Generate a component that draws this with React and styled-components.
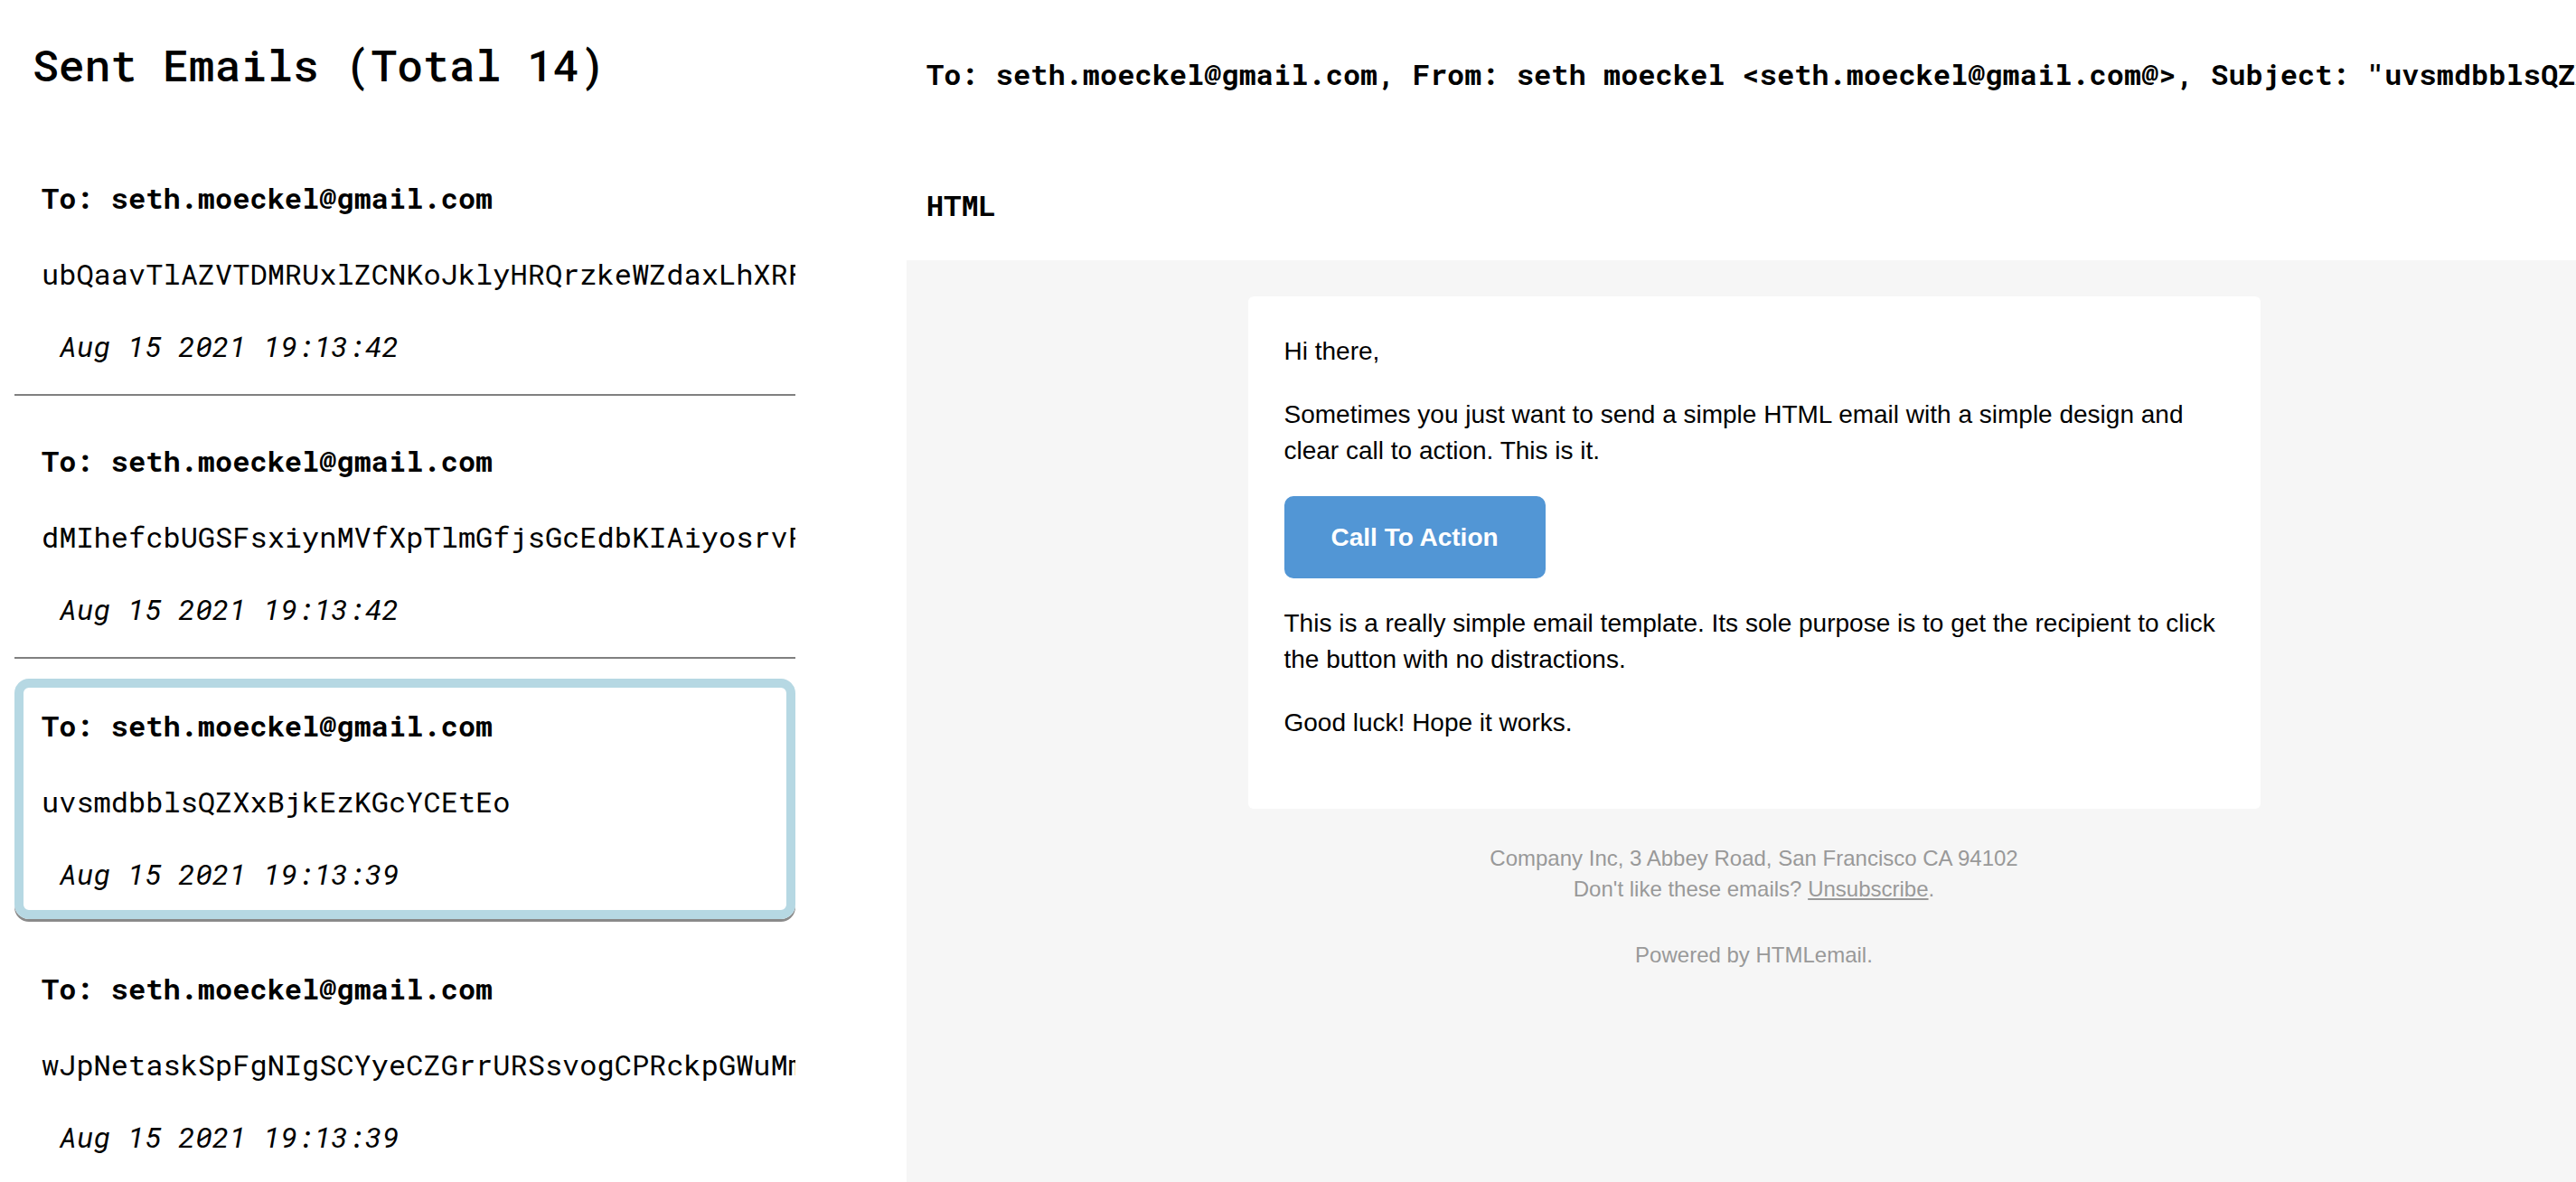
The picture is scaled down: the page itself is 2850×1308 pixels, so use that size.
import React from 'react'
import styled, { createGlobalStyle } from 'styled-components'

const GlobalStyle = createGlobalStyle`
  html, body {
    margin: 0;
    padding: 0;
    background: #fff;
    overflow: hidden;
  }
`

const mono = `"Roboto Mono", "DejaVu Sans Mono", monospace`
const sans = `Helvetica, "Liberation Sans", Arial, sans-serif`

const Page = styled.div`
  display: flex;
  width: 100vw;
  height: 100vh;
  overflow: hidden;
  font-family: ${mono};
  color: #000;
`

const Sidebar = styled.aside`
  flex: 0 0 864px;
  width: 864px;
  min-width: 0;
  overflow: hidden;
  margin: 0 123px 0 16px;
  display: flex;
  flex-direction: column;
`

const Title = styled.h1`
  margin: 42px 0 45px 20px;
  font-size: 48px;
  line-height: 60px;
  font-weight: 500;
  white-space: nowrap;
`

const List = styled.div`
  display: flex;
  flex-direction: column;
`

const Item = styled.div`
  display: flex;
  flex-direction: column;
  overflow: hidden;
  padding: ${p => (p.$selected ? '22px 0 20px 20px' : '52px 0 33px 30px')};
  margin: ${p => (p.$selected ? '22px 0 5px' : '0')};
  border: ${p => (p.$selected ? '10px solid #b6d8e3' : 'none')};
  border-bottom: ${p => (p.$selected ? '10px solid #b6d8e3' : '2px solid #808080')};
  border-radius: ${p => (p.$selected ? '16px' : '0')};
  box-shadow: ${p => (p.$selected ? '0 3px 0 #8a8a8a' : 'none')};
`

const ToLine = styled.div`
  font-size: 32px;
  line-height: 40px;
  font-weight: 700;
  white-space: nowrap;
`

const Subject = styled.div`
  margin-top: 44px;
  font-size: 32px;
  line-height: 40px;
  white-space: nowrap;
`

const DateLine = styled.div`
  margin-top: 40px;
  padding-left: 20px;
  font-size: 32px;
  line-height: 40px;
  font-style: italic;
  white-space: nowrap;
`

const Main = styled.main`
  flex: 1;
  min-width: 0;
  display: flex;
  flex-direction: column;
  overflow: hidden;
`

const Header = styled.div`
  margin: 62px 0 0 22px;
  font-size: 32px;
  line-height: 40px;
  font-weight: 700;
  white-space: nowrap;
`

const Kind = styled(Header)`
  margin: 105px 0 41px 22px;
`

const Preview = styled.div`
  flex: 1;
  background: #f6f6f6;
  padding-left: 28px;
  font-family: ${sans};
  font-size: 28px;
  line-height: 40px;
`

const Container = styled.div`
  max-width: 1160px;
  margin: 0 auto;
  padding: 40px 20px 0;
  box-sizing: border-box;
`

const Card = styled.div`
  background: #fff;
  border-radius: 6px;
  padding: 41px 40px 45px;
`

const Para = styled.p`
  margin: 0 0 30px;
  font-weight: 400;
`

const ButtonWrap = styled.div`
  margin: 2px 0 30px;
`

const CtaButton = styled.a`
  display: inline-block;
  padding: 24px 50px;
  border: 2px solid #5296d5;
  border-radius: 10px;
  background: #5296d5;
  color: #fff;
  font-weight: 700;
  line-height: 39px;
  text-decoration: none;
`

const Footer = styled.div`
  margin-top: 18px;
  text-align: center;
  color: #999;
  font-size: 24px;
  line-height: 33.6px;
`

const FooterBlock = styled.div`
  padding: 20px 0;
`

const FooterLink = styled.a`
  color: #999;
  text-decoration: underline;
`

const emails = [
  { id: 1, to: 'seth.moeckel@gmail.com', subject: 'ubQaavTlAZVTDMRUxlZCNKoJklyHRQrzkeWZdaxLhXRFqWmzPt', date: 'Aug 15 2021 19:13:42' },
  { id: 2, to: 'seth.moeckel@gmail.com', subject: 'dMIhefcbUGSFsxiynMVfXpTlmGfjsGcEdbKIAiyosrvPkLqeNa', date: 'Aug 15 2021 19:13:42' },
  { id: 3, to: 'seth.moeckel@gmail.com', subject: 'uvsmdbblsQZXxBjkEzKGcYCEtEo', date: 'Aug 15 2021 19:13:39', selected: true },
  { id: 4, to: 'seth.moeckel@gmail.com', subject: 'wJpNetaskSpFgNIgSCYyeCZGrrURSsvogCPRckpGWuMmnHbTs', date: 'Aug 15 2021 19:13:39' },
]

export default function App() {
  const current = emails.find(e => e.selected)

  return (
    <Page>
      <GlobalStyle />
      <Sidebar>
        <Title>Sent Emails (Total 14)</Title>
        <List>
          {emails.map(email => (
            <Item key={email.id} $selected={email.selected}>
              <ToLine>To: {email.to}</ToLine>
              <Subject>{email.subject}</Subject>
              <DateLine>{email.date}</DateLine>
            </Item>
          ))}
        </List>
      </Sidebar>

      <Main>
        <Header>
          To: {current.to}, From: seth moeckel &lt;{current.to}@&gt;, Subject: "{current.subject}"
        </Header>
        <Kind>HTML</Kind>
        <Preview>
          <Container>
            <Card>
              <Para>Hi there,</Para>
              <Para>Sometimes you just want to send a simple HTML email with a simple design and clear call to action. This is it.</Para>
              <ButtonWrap>
                <CtaButton href="#">Call To Action</CtaButton>
              </ButtonWrap>
              <Para>This is a really simple email template. Its sole purpose is to get the recipient to click the button with no distractions.</Para>
              <Para>Good luck! Hope it works.</Para>
            </Card>
            <Footer>
              <FooterBlock>
                Company Inc, 3 Abbey Road, San Francisco CA 94102
                <br />
                Don't like these emails? <FooterLink href="#">Unsubscribe</FooterLink>.
              </FooterBlock>
              <FooterBlock>Powered by HTMLemail.</FooterBlock>
            </Footer>
          </Container>
        </Preview>
      </Main>
    </Page>
  )
}
